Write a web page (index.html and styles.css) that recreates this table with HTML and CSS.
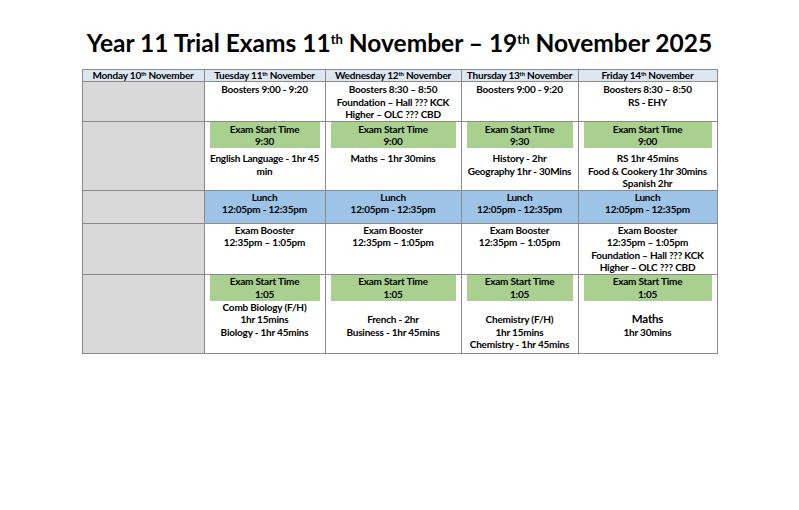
FILE: index.html
```html
<!DOCTYPE html>
<html>
<head>
<meta charset="utf-8">
<link rel="stylesheet" href="styles.css">
</head>
<body>
<h1 class="title">Year 11 Trial Exams 11<sup>th</sup> November – 19<sup>th</sup> November 2025</h1>
<table class="tt">
  <colgroup>
    <col class="c-mon"><col class="c-tue"><col class="c-wed"><col class="c-thu"><col class="c-fri">
  </colgroup>
  <thead>
    <tr class="rh">
      <th>Monday 10<sup>th</sup> November</th>
      <th>Tuesday 11<sup>th</sup> November</th>
      <th>Wednesday 12<sup>th</sup> November</th>
      <th>Thursday 13<sup>th</sup> November</th>
      <th>Friday 14<sup>th</sup> November</th>
    </tr>
  </thead>
  <tbody>
    <tr class="r1">
      <td class="mon"></td>
      <td><div>Boosters 9:00 - 9:20</div></td>
      <td><div>Boosters 8:30 – 8:50</div><div>Foundation – Hall ??? KCK</div><div>Higher – OLC ??? CBD</div></td>
      <td><div>Boosters 9:00 - 9:20</div></td>
      <td><div>Boosters 8:30 – 8:50</div><div>RS - EHY</div></td>
    </tr>
    <tr class="r2">
      <td class="mon"></td>
      <td><div class="start"><div>Exam Start Time</div><div>9:30</div></div><div class="after nowrap">English Language - 1hr 45</div><div>min</div></td>
      <td><div class="start"><div>Exam Start Time</div><div>9:00</div></div><div class="after">Maths – 1hr 30mins</div></td>
      <td><div class="start"><div>Exam Start Time</div><div>9:30</div></div><div class="after">History - 2hr</div><div>Geography 1hr - 30Mins</div></td>
      <td><div class="start"><div>Exam Start Time</div><div>9:00</div></div><div class="after">RS 1hr 45mins</div><div>Food &amp; Cookery 1hr 30mins</div><div>Spanish 2hr</div></td>
    </tr>
    <tr class="r3">
      <td class="mon"></td>
      <td class="lunch"><div>Lunch</div><div>12:05pm - 12:35pm</div></td>
      <td class="lunch"><div>Lunch</div><div>12:05pm - 12:35pm</div></td>
      <td class="lunch"><div>Lunch</div><div>12:05pm - 12:35pm</div></td>
      <td class="lunch"><div>Lunch</div><div>12:05pm - 12:35pm</div></td>
    </tr>
    <tr class="r4">
      <td class="mon"></td>
      <td><div>Exam Booster</div><div>12:35pm – 1:05pm</div></td>
      <td><div>Exam Booster</div><div>12:35pm – 1:05pm</div></td>
      <td><div>Exam Booster</div><div>12:35pm – 1:05pm</div></td>
      <td><div>Exam Booster</div><div>12:35pm – 1:05pm</div><div>Foundation – Hall ??? KCK</div><div>Higher – OLC ??? CBD</div></td>
    </tr>
    <tr class="r5">
      <td class="mon"></td>
      <td><div class="start"><div>Exam Start Time</div><div>1:05</div></div><div>Comb Biology (F/H)</div><div>1hr 15mins</div><div>Biology - 1hr 45mins</div></td>
      <td><div class="start"><div>Exam Start Time</div><div>1:05</div></div><div class="blank"></div><div>French - 2hr</div><div>Business - 1hr 45mins</div></td>
      <td><div class="start"><div>Exam Start Time</div><div>1:05</div></div><div class="blank"></div><div>Chemistry (F/H)</div><div>1hr 15mins</div><div>Chemistry - 1hr 45mins</div></td>
      <td><div class="start"><div>Exam Start Time</div><div>1:05</div></div><div class="blank"></div><div class="big">Maths</div><div>1hr 30mins</div></td>
    </tr>
  </tbody>
</table>
</body>
</html>
```
FILE: styles.css
```css
html, body {
  margin: 0;
  padding: 0;
  background: #ffffff;
}
body {
  font-family: Lato, "Open Sans", sans-serif;
  color: #000000;
}
.title {
  margin: 28px 0 0;
  height: 41px;
  font-size: 24.5px;
  line-height: 30px;
  font-weight: 700;
  text-align: center;
  letter-spacing: 0;
  color: #000000;
}
.title sup {
  font-size: 13px;
  vertical-align: 8px;
  line-height: 0;
}
.tt {
  margin: 0 auto;
  border-collapse: collapse;
  table-layout: fixed;
  width: 635px;
  font-size: 10px;
  line-height: 12.5px;
  font-weight: 700;
  text-align: center;
  letter-spacing: -0.2px;
}
.c-mon { width: 122px; }
.c-tue { width: 121px; }
.c-wed { width: 136px; }
.c-thu { width: 117px; }
.c-fri { width: 139px; }
.tt th, .tt td {
  border: 1px solid #8a8a8a;
  vertical-align: top;
  padding: 0 5px;
}
.tt th {
  background: #dce6f1;
  font-size: 10px;
  line-height: 11px;
  padding: 0;
  height: 11px;
  white-space: nowrap;
}
.tt sup {
  font-size: 6px;
  vertical-align: 3px;
  line-height: 0;
}
.tt td.mon {
  background: #d9d9d9;
}
.r1 td { height: 38px; padding-top: 1px; }
.r2 td { height: 67px; }
.r3 td { height: 32px; }
.r4 td { height: 49px; }
.r5 td { height: 78px; }
.start {
  background: #a9d08e;
  padding: 0.5px 0;
}
.after {
  margin-top: 4px;
}
.nowrap {
  white-space: nowrap;
  margin-left: -4px;
  margin-right: -4px;
}
.lunch {
  background: #9dc3e6;
}
.blank { height: 12.5px; }
.big { font-size: 11.5px; }
```
